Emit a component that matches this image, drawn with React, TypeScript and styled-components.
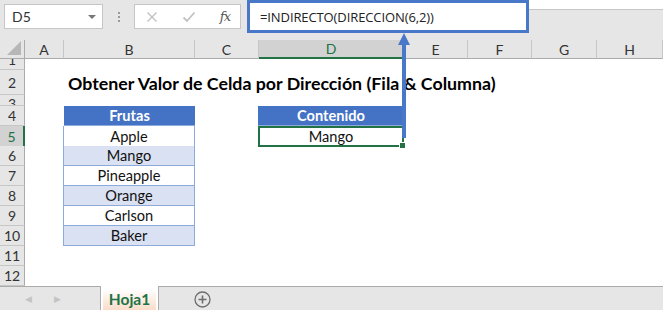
import React from "react";
import styled, { createGlobalStyle } from "styled-components";

const Global = createGlobalStyle`
  html, body { margin: 0; padding: 0; background: #fff; }
  body { font-family: Lato, "Liberation Sans", sans-serif; }
`;

const COLS = "25px 39px 131px 64px 145px 64px 64px 65px 1fr";
const GREEN = "#217346";
const BLUE = "#4472c4";

const Page = styled.div`
  position: relative;
  width: 663px;
  height: 310px;
  overflow: hidden;
  display: flex;
  flex-direction: column;
  background: #fff;
`;

const FormulaBar = styled.div`
  height: 40px;
  background: #e6e6e6;
  display: flex;
  align-items: flex-start;
  flex-shrink: 0;
`;

const NameBox = styled.div`
  margin: 4px 0 0 4px;
  width: 99px;
  height: 25px;
  background: #fff;
  border: 1px solid #c6c6c6;
  display: flex;
  align-items: center;
  justify-content: space-between;
  padding: 0 6px 0 7px;
  box-sizing: border-box;
  font-size: 14px;
  color: #333;
`;

const Caret = styled.span`
  width: 0;
  height: 0;
  border-left: 4px solid transparent;
  border-right: 4px solid transparent;
  border-top: 4px solid #777;
`;

const Dots = styled.div`
  width: 31px;
  height: 33px;
  display: flex;
  flex-direction: column;
  align-items: center;
  justify-content: center;
  gap: 2px;
  span {
    width: 2px;
    height: 2px;
    background: #9a9a9a;
  }
`;

const ButtonsBox = styled.div`
  margin-top: 4px;
  width: 107px;
  height: 25px;
  background: #fff;
  border: 1px solid #c6c6c6;
  box-sizing: border-box;
  display: flex;
  align-items: center;
  padding: 0 10px 0 11px;
  justify-content: space-between;
`;

const Fx = styled.span`
  font-family: "DejaVu Serif", "Liberation Serif", serif;
  font-style: italic;
  font-size: 13px;
  color: #555;
  letter-spacing: -1px;
`;

const FormulaInput = styled.div`
  margin-left: 6px;
  width: 282px;
  height: 33px;
  background: #fff;
  border: 3px solid #4a78c8;
  box-sizing: border-box;
  display: flex;
  align-items: center;
  padding-left: 10px;
  font-family: "Open Sans", sans-serif;
  font-size: 13px;
  color: #222;
  letter-spacing: -0.1px;
`;

const FormulaRest = styled.div`
  flex: 1;
  height: 9px;
  background: #fff;
  border-bottom: 1px solid #c6c6c6;
`;

const Row = styled.div<{ $h: number }>`
  display: grid;
  grid-template-columns: ${COLS};
  height: ${(p) => p.$h}px;
  flex-shrink: 0;
`;

const Corner = styled.div`
  background: #e6e6e6;
  border-right: 1px solid #ababab;
  border-bottom: 1px solid #ababab;
  position: relative;
  &::after {
    content: "";
    position: absolute;
    right: 3px;
    bottom: 3px;
    width: 0;
    height: 0;
    border-left: 14px solid transparent;
    border-bottom: 14px solid #b7b7b7;
  }
`;

const ColHead = styled.div<{ $sel?: boolean }>`
  background: ${(p) => (p.$sel ? "#d2d2d2" : "#e6e6e6")};
  border-right: 1px solid #c6c6c6;
  border-bottom: ${(p) => (p.$sel ? `2px solid ${GREEN}` : "1px solid #ababab")};
  display: flex;
  align-items: center;
  justify-content: center;
  font-size: 14px;
  color: ${(p) => (p.$sel ? GREEN : "#333")};
  box-sizing: border-box;
`;

const RowHead = styled.div<{ $sel?: boolean; $shift?: number }>`
  background: ${(p) => (p.$sel ? "#d2d2d2" : "#e6e6e6")};
  border-right: ${(p) => (p.$sel ? `2px solid ${GREEN}` : "1px solid #ababab")};
  border-bottom: 1px solid #c6c6c6;
  box-sizing: border-box;
  display: flex;
  align-items: center;
  justify-content: center;
  font-size: 14px;
  color: ${(p) => (p.$sel ? GREEN : "#333")};
  overflow: hidden;
  span {
    transform: translateY(${(p) => p.$shift ?? 0}px);
  }
`;

const Cell = styled.div`
  min-width: 0;
`;

const Title = styled.div`
  grid-column: 3 / span 6;
  padding-left: 4px;
  display: flex;
  align-items: flex-end;
  padding-bottom: 1px;
  font-weight: 700;
  font-size: 17.8px;
  color: #000;
  white-space: nowrap;
`;

const TableHead = styled.div`
  background: ${BLUE};
  color: #fff;
  font-weight: 700;
  font-size: 14.6px;
  display: flex;
  align-items: center;
  justify-content: center;
  border-bottom: 1px solid #8ea9db;
`;

const TableCell = styled.div<{ $band: boolean }>`
  background: ${(p) => (p.$band ? "#d9e1f2" : "#fff")};
  border-left: 1px solid #8ea9db;
  border-right: 1px solid #8ea9db;
  border-bottom: 1px solid #8ea9db;
  box-sizing: border-box;
  margin-left: -1px;
  display: flex;
  align-items: center;
  justify-content: center;
  font-size: 14.6px;
  color: #111;
`;

const ActiveCell = styled.div`
  border: 2px solid ${GREEN};
  box-sizing: border-box;
  margin-left: -1px;
  display: flex;
  align-items: center;
  justify-content: center;
  font-size: 14.6px;
  color: #111;
  position: relative;
  &::after {
    content: "";
    position: absolute;
    right: -4px;
    bottom: -4px;
    width: 5px;
    height: 5px;
    background: ${GREEN};
    border: 1px solid #fff;
  }
`;

const TabBar = styled.div`
  flex: 1;
  background: #e6e6e6;
  border-top: 1px solid #ababab;
  display: flex;
  align-items: stretch;
`;

const NavArrows = styled.div`
  width: 100px;
  box-sizing: border-box;
  display: flex;
  align-items: center;
  padding-left: 25px;
  gap: 22px;
  color: #c4c4c4;
  font-size: 9px;
`;

const SheetTab = styled.div`
  width: 59px;
  margin-top: -1px;
  border-left: 1px solid #ababab;
  border-right: 1px solid #ababab;
  background: #fff;
  display: flex;
  justify-content: center;
  align-items: stretch;
  padding: 3px 2px 0;
  box-sizing: border-box;
`;

const TabLabel = styled.div`
  flex: 1;
  background: linear-gradient(#fff 0%, #fdf1ea 40%, #f9dcc9 100%);
  color: ${GREEN};
  font-weight: 700;
  font-size: 15.5px;
  display: flex;
  align-items: center;
  justify-content: center;
  padding-bottom: 2px;
`;

const AddSheet = styled.div`
  width: 86px;
  display: flex;
  align-items: center;
  justify-content: center;
  padding-top: 1px;
`;

const Arrow = styled.svg`
  position: absolute;
  left: 396px;
  top: 32px;
  pointer-events: none;
`;

const fruits = ["Apple", "Mango", "Pineapple", "Orange", "Carlson", "Baker"];
const colLetters = ["A", "B", "C", "D", "E", "F", "G", "H"];

export default function App() {
  const emptyCells = (n: number, from = 0) =>
    Array.from({ length: n }, (_, i) => <Cell key={`e${from + i}`} />);

  const rowsData: { n: number; h: number; shift?: number }[] = [
    { n: 1, h: 11, shift: -5 },
    { n: 2, h: 25 },
    { n: 3, h: 11, shift: 3 },
    { n: 4, h: 20 },
    { n: 5, h: 20 },
    { n: 6, h: 20 },
    { n: 7, h: 20 },
    { n: 8, h: 20 },
    { n: 9, h: 20 },
    { n: 10, h: 20 },
    { n: 11, h: 20 },
    { n: 12, h: 20 },
  ];

  const renderCells = (n: number) => {
    if (n === 2) {
      return [<Cell key="a" />, <Title key="t">Obtener Valor de Celda por Dirección (Fila &amp; Columna)</Title>, <Cell key="h" />];
    }
    if (n === 4) {
      return [
        <Cell key="a" />,
        <TableHead key="b">Frutas</TableHead>,
        <Cell key="c" />,
        <TableHead key="d" style={{ marginLeft: -1 }}>Contenido</TableHead>,
        ...emptyCells(4, 10),
      ];
    }
    if (n >= 5 && n <= 10) {
      const i = n - 5;
      return [
        <Cell key="a" />,
        <TableCell key="b" $band={i % 2 === 1}>{fruits[i]}</TableCell>,
        <Cell key="c" />,
        n === 5 ? <ActiveCell key="d">Mango</ActiveCell> : <Cell key="d" />,
        ...emptyCells(4, 10),
      ];
    }
    return emptyCells(8);
  };

  return (
    <Page>
      <Global />
      <FormulaBar>
        <NameBox>
          D5
          <Caret />
        </NameBox>
        <Dots>
          <span />
          <span />
          <span />
        </Dots>
        <ButtonsBox>
          <svg width="12" height="12" viewBox="0 0 12 12">
            <path d="M1.5 1.5 L10.5 10.5 M10.5 1.5 L1.5 10.5" stroke="#c2c2c2" strokeWidth="1.4" fill="none" />
          </svg>
          <svg width="14" height="12" viewBox="0 0 14 12">
            <path d="M1.5 6.5 L5 10 L12.5 1.5" stroke="#c2c2c2" strokeWidth="1.8" fill="none" />
          </svg>
          <Fx>fx</Fx>
        </ButtonsBox>
        <FormulaInput>=INDIRECTO(DIRECCION(6,2))</FormulaInput>
        <FormulaRest />
      </FormulaBar>

      <Row $h={19}>
        <Corner />
        {colLetters.map((c) => (
          <ColHead key={c} $sel={c === "D"}>
            {c}
          </ColHead>
        ))}
      </Row>

      {rowsData.map((r) => (
        <Row key={r.n} $h={r.h}>
          <RowHead $sel={r.n === 5} $shift={r.shift}>
            <span>{r.n}</span>
          </RowHead>
          {renderCells(r.n)}
        </Row>
      ))}

      <TabBar>
        <NavArrows>
          <span>◀</span>
          <span>▶</span>
        </NavArrows>
        <SheetTab>
          <TabLabel>Hoja1</TabLabel>
        </SheetTab>
        <AddSheet>
          <svg width="17" height="17" viewBox="0 0 17 17">
            <circle cx="8.5" cy="8.5" r="7.5" stroke="#6d6d6d" strokeWidth="1.3" fill="none" />
            <path d="M8.5 4.5 V12.5 M4.5 8.5 H12.5" stroke="#6d6d6d" strokeWidth="1.6" />
          </svg>
        </AddSheet>
      </TabBar>

      <Arrow width="16" height="108" viewBox="0 0 16 108">
        <path d="M8 1 L14 13 L10 13 L10 106 L6 106 L6 13 L2 13 Z" fill="#4a78c8" />
      </Arrow>
    </Page>
  );
}
